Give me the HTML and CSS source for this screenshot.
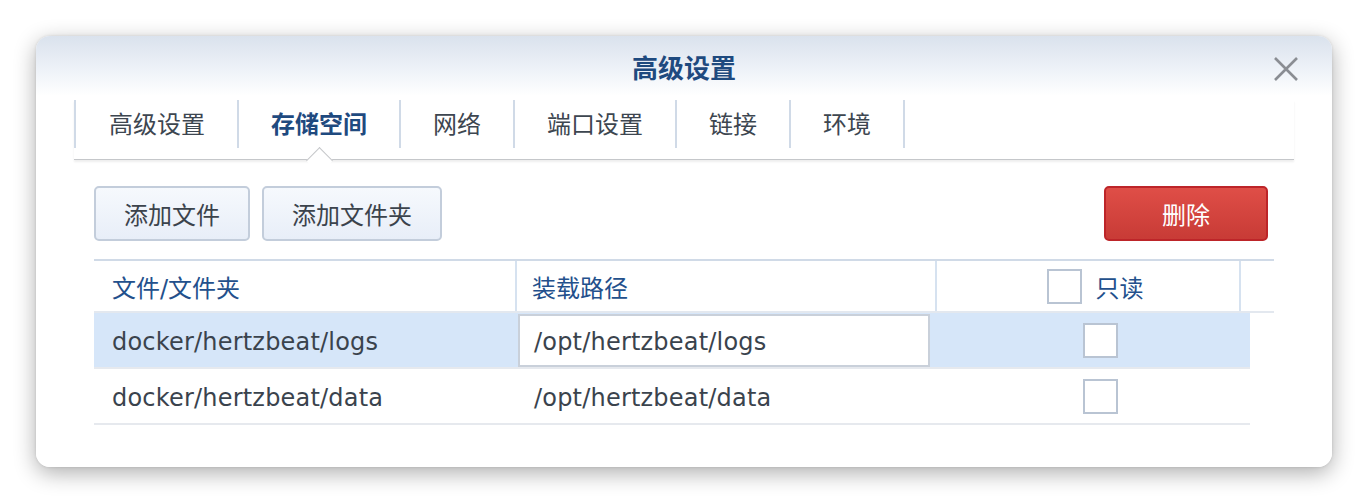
FILE: index.html
```html
<!DOCTYPE html>
<html lang="zh-CN">
<head>
<meta charset="utf-8">
<title>高级设置</title>
<link rel="stylesheet" href="styles.css">
</head>
<body>
<div class="dialog">
  <div class="titlebar">
    <span></span>
    <span class="title">高级设置</span>
    <button class="close" aria-label="close">
      <svg width="26" height="26" viewBox="0 0 26 26"><path d="M2 2 L24 24 M24 2 L2 24" stroke="#8a8d93" stroke-width="2.6" stroke-linecap="butt" fill="none"/></svg>
    </button>
  </div>
  <div class="tabs">
    <div class="tab">高级设置</div>
    <div class="tab active">存储空间</div>
    <div class="tab">网络</div>
    <div class="tab">端口设置</div>
    <div class="tab">链接</div>
    <div class="tab last">环境</div>
  </div>
  <div class="content">
    <div class="toolbar">
      <button class="btn">添加文件</button>
      <button class="btn">添加文件夹</button>
      <span class="spacer"></span>
      <button class="btn danger">删除</button>
    </div>
    <div class="grid">
      <div class="grid-head">
        <div class="hcell c1">文件/文件夹</div>
        <div class="hcell c2">装载路径</div>
        <div class="hcell c3"><span class="check"></span><span>只读</span></div>
        <div class="hcell c4"></div>
      </div>
      <div class="row selected">
        <div class="cell c1">docker/hertzbeat/logs</div>
        <div class="cell c2"><div class="input">/opt/hertzbeat/logs</div></div>
        <div class="cell c3r"><span class="check"></span></div>
      </div>
      <div class="row">
        <div class="cell c1">docker/hertzbeat/data</div>
        <div class="cell c2"><div class="plain">/opt/hertzbeat/data</div></div>
        <div class="cell c3r"><span class="check"></span></div>
      </div>
    </div>
  </div>
</div>
</body>
</html>
```
FILE: styles.css
```css
html, body {
  margin: 0;
  padding: 0;
  background: #ffffff;
}
body {
  font-family: "DejaVu Sans", "Noto Sans CJK SC", sans-serif;
  font-size: 24px;
  color: #3a434d;
  padding: 36px;
  width: 1296px;
}
.dialog {
  width: 1296px;
  height: 431px;
  border-radius: 14px;
  background: linear-gradient(to bottom, #dae2ed 0px, #eef2f8 34px, #ffffff 60px, #ffffff 100%);
  box-shadow: 0 6px 22px rgba(0, 0, 0, 0.32), 0 0 3px rgba(0, 0, 0, 0.12);
  display: flex;
  flex-direction: column;
}
.titlebar {
  height: 64px;
  display: grid;
  grid-template-columns: 1fr auto 1fr;
  align-items: center;
}
.title {
  font-weight: bold;
  color: #1f4a7f;
  font-size: 26px;
  margin-top: -4px;
}
.close {
  justify-self: end;
  margin-right: 33px;
  margin-top: 2px;
  background: none;
  border: 0;
  padding: 0;
  width: 26px;
  height: 26px;
  display: flex;
}
.tabs {
  margin: 0 38px;
  display: flex;
  padding-bottom: 11px;
  border-bottom: 1px solid #c5c7ca;
  box-shadow: 0 2px 2px rgba(0, 0, 0, 0.07);
}
.tab {
  position: relative;
  height: 48px;
  line-height: 50px;
  padding: 0 32px;
  border-left: 2px solid #d0dae7;
  color: #3d4650;
  white-space: nowrap;
}
.tab:first-child {
  padding-left: 33px;
}
.tab.last {
  border-right: 2px solid #d0dae7;
}
.tab.active {
  font-weight: bold;
  color: #1f4a7f;
}
.tab.active::after {
  content: "";
  position: absolute;
  left: 50%;
  top: 51px;
  width: 18px;
  height: 18px;
  margin-left: -9px;
  background: #ffffff;
  border-top: 1px solid #c5c7ca;
  border-left: 1px solid #c5c7ca;
  transform: rotate(45deg);
}
.content {
  padding: 26px 58px 0 58px;
}
.toolbar {
  display: flex;
  gap: 12px;
  height: 55px;
}
.spacer {
  flex: 1;
}
.btn {
  font-family: "DejaVu Sans", "Noto Sans CJK SC", sans-serif;
  font-size: 24px;
  color: #3b434c;
  height: 55px;
  padding: 0 28px;
  border: 2px solid #c3cddb;
  border-radius: 5px;
  background: linear-gradient(to bottom, #f6f9fd, #e8eef8);
}
.btn.danger {
  margin-right: 6px;
  width: 164px;
  color: #ffffff;
  border-color: #bd2529;
  background: linear-gradient(to bottom, #df4e47, #c83b36);
}
.grid {
  margin-top: 18px;
}
.grid-head {
  display: flex;
  height: 50px;
  border-top: 2px solid #d0dae7;
  border-bottom: 2px solid #e3e8ef;
}
.hcell {
  display: flex;
  align-items: center;
  color: #23508c;
  font-size: 24px;
  box-sizing: border-box;
}
.c1 {
  width: 421px;
  padding-left: 18px;
  box-sizing: border-box;
}
.c2 {
  width: 420px;
  box-sizing: border-box;
}
.hcell.c2 {
  border-left: 2px solid #d6e2f0;
  padding-left: 15px;
}
.hcell.c3 {
  width: 306px;
  border-left: 2px solid #d6e2f0;
  border-right: 2px solid #d6e2f0;
  justify-content: center;
  gap: 14px;
  padding-left: 14px;
}
.hcell.c4 {
  width: 33px;
}
.check {
  display: inline-block;
  width: 31px;
  height: 31px;
  border: 2px solid #b9c4d3;
  background: #ffffff;
}
.row {
  display: flex;
  width: 1156px;
  height: 54px;
  border-bottom: 2px solid #e6e9ee;
  align-items: center;
}
.row.selected {
  background: #d6e6f9;
}
.cell {
  box-sizing: border-box;
  white-space: nowrap;
}
.cell.c1 {
  font-size: 24px;
  padding-top: 4px;
  letter-spacing: 0.2px;
}
.cell.c2 {
  padding-left: 3px;
  padding-right: 5px;
}
.input {
  height: 49px;
  line-height: 53px;
  border: 2px solid #c9d0da;
  background: #ffffff;
  padding-left: 14px;
  font-size: 24px;
  margin-top: 1px;
  letter-spacing: 0.2px;
}
.plain {
  padding-left: 16px;
  padding-top: 4px;
  font-size: 24px;
  letter-spacing: 0.2px;
}
.c3r {
  flex: 1;
  display: flex;
  justify-content: center;
  padding-left: 15px;
}
```
